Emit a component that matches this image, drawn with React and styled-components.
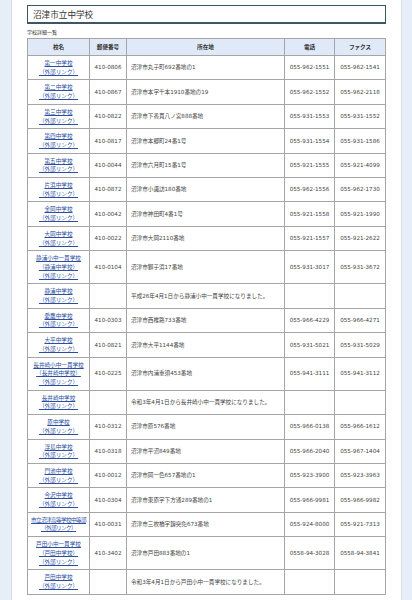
import styled, { createGlobalStyle } from "styled-components";

const schools = [
    { name: ["第一中学校"], zip: "410-0806", addr: "沼津市丸子町692番地の1", tel: "055-962-1551", fax: "055-962-1541" },
    { name: ["第二中学校"], zip: "410-0867", addr: "沼津市本字千本1910番地の19", tel: "055-962-1552", fax: "055-962-2118" },
    { name: ["第三中学校"], zip: "410-0822", addr: "沼津市下香貫八ノ宮888番地", tel: "055-931-1553", fax: "055-931-1552" },
    { name: ["第四中学校"], zip: "410-0817", addr: "沼津市本郷町24番1号", tel: "055-931-1554", fax: "055-931-1586" },
    { name: ["第五中学校"], zip: "410-0044", addr: "沼津市六月町15番1号", tel: "055-921-1555", fax: "055-921-4099" },
    { name: ["片浜中学校"], zip: "410-0872", addr: "沼津市小諏訪180番地", tel: "055-962-1556", fax: "055-962-1730" },
    { name: ["金岡中学校"], zip: "410-0042", addr: "沼津市神田町4番1号", tel: "055-921-1558", fax: "055-921-1990" },
    { name: ["大岡中学校"], zip: "410-0022", addr: "沼津市大岡2110番地", tel: "055-921-1557", fax: "055-921-2622" },
    { name: ["静浦小中一貫学校", "（静浦中学校）"], zip: "410-0104", addr: "沼津市獅子浜17番地", tel: "055-931-3017", fax: "055-931-3672" },
    { name: ["静浦中学校"], zip: "", addr: "平成26年4月1日から静浦小中一貫学校になりました。", tel: "", fax: "" },
    { name: ["愛鷹中学校"], zip: "410-0303", addr: "沼津市西椎路733番地", tel: "055-966-4229", fax: "055-966-4271" },
    { name: ["大平中学校"], zip: "410-0821", addr: "沼津市大平1144番地", tel: "055-931-5021", fax: "055-931-5029" },
    { name: ["長井崎小中一貫学校", "（長井崎中学校）"], zip: "410-0225", addr: "沼津市内浦重須453番地", tel: "055-941-3111", fax: "055-941-3112" },
    { name: ["長井崎中学校"], zip: "", addr: "令和3年4月1日から長井崎小中一貫学校になりました。", tel: "", fax: "" },
    { name: ["原中学校"], zip: "410-0312", addr: "沼津市原576番地", tel: "055-966-0138", fax: "055-966-1612" },
    { name: ["浮島中学校"], zip: "410-0318", addr: "沼津市平沼849番地", tel: "055-966-2040", fax: "055-967-1404" },
    { name: ["門池中学校"], zip: "410-0012", addr: "沼津市岡一色657番地の1", tel: "055-923-3900", fax: "055-923-3963" },
    { name: ["今沢中学校"], zip: "410-0304", addr: "沼津市東原字下方通289番地の1", tel: "055-966-9981", fax: "055-966-9982" },
    { name: ["市立沼津高等学校中等部"], zip: "410-0031", addr: "沼津市三枚橋字鐘突免673番地", tel: "055-924-8000", fax: "055-921-7313", tight: true },
    { name: ["戸田小中一貫学校", "（戸田中学校）"], zip: "410-3402", addr: "沼津市戸田883番地の1", tel: "0558-94-3028", fax: "0558-94-3841" },
    { name: ["戸田中学校"], zip: "", addr: "令和3年4月1日から戸田小中一貫学校になりました。", tel: "", fax: "" },
];

export default function App(){
    return(
        <>
            <GlobalStyle />
            <Panel>
                <Title>沼津市立中学校</Title>
                <Caption>学校詳細一覧</Caption>
                <Table>
                    <colgroup>
                        <col style={{width: "62px"}} />
                        <col style={{width: "37px"}} />
                        <col style={{width: "158px"}} />
                        <col style={{width: "50px"}} />
                        <col />
                    </colgroup>
                    <thead>
                        <tr>
                            <Th>校名</Th>
                            <Th>郵便番号</Th>
                            <Th>所在地</Th>
                            <Th>電話</Th>
                            <Th>ファクス</Th>
                        </tr>
                    </thead>
                    <tbody>
                        {schools.map((s) =>
                            <tr key={s.name[0]}>
                                <Td $center $tight={s.tight}>
                                    <SchoolLink href="#">
                                        {s.name.map((line) => <span key={line}>{line}<br /></span>)}
                                        （外部リンク）
                                    </SchoolLink>
                                </Td>
                                <Td $center>{s.zip}</Td>
                                <Td>{s.addr}</Td>
                                <Td $center>{s.tel}</Td>
                                <Td $center>{s.fax}</Td>
                            </tr>
                        )}
                    </tbody>
                </Table>
            </Panel>
        </>
    )
}

const GlobalStyle = createGlobalStyle`
    body {
        margin: 0;
        background-color: #e6eef7;
        font-family: "DejaVu Sans", "Noto Sans CJK JP", sans-serif;
        color: #444444;
    }
`;

const Panel = styled.main`
    box-sizing: border-box;
    width: 391px;
    min-height: 100vh;
    margin-left: 11px;
    padding: 5px 15px 8px 15px;
    background-color: #FFFFFF;
    border-left: 1px solid #d6e0ea;
    border-right: 1px solid #d6e0ea;
`;

const Title = styled.h1`
    box-sizing: border-box;
    height: 19px;
    margin: 0;
    padding: 0 5px;
    display: flex;
    align-items: center;
    border: 1px solid #3d5666;
    border-bottom-width: 2px;
    font-family: "Noto Sans CJK JP", sans-serif;
    font-size: 8.6px;
    font-weight: 400;
    color: #333333;
`;

const Caption = styled.p`
    margin: 0;
    padding-top: 3px;
    height: 11px;
    font-family: "Noto Sans CJK JP", sans-serif;
    font-size: 5px;
    line-height: 10px;
    color: #333333;
`;

const Table = styled.table`
    width: 100%;
    border-collapse: collapse;
    table-layout: fixed;
    border: 1px solid #a5a5a5;
    font-size: 5.6px;
    line-height: 8.7px;
`;

const Th = styled.th`
    height: 14px;
    padding: 1px 3px;
    background-color: #dfe9f7;
    border: 1px solid #a5a5a5;
    font-weight: 700;
    color: #333333;
    text-align: center;
`;

const Td = styled.td`
    padding: 3px ${(p) => (p.$tight ? "1px" : "4px")};
    border: 1px solid #a5a5a5;
    text-align: ${(p) => (p.$center ? "center" : "left")};
    vertical-align: middle;
    white-space: nowrap;
    overflow: hidden;
    letter-spacing: ${(p) => (p.$tight ? "-0.6px" : "normal")};
`;

const SchoolLink = styled.a`
    color: #2b4ea0;
    text-decoration: underline;
    text-underline-offset: 1px;
`;
